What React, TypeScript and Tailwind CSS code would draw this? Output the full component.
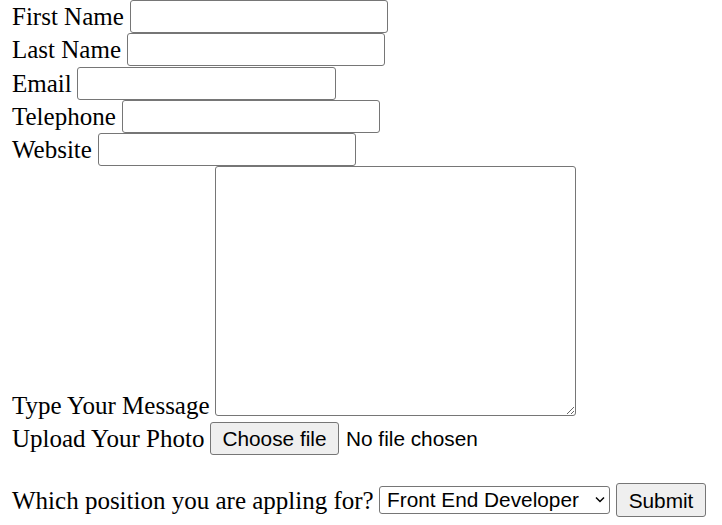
const fields = [
  { label: "First Name", w: "w-[118px]", input: "w-[258px]" },
  { label: "Last Name", w: "w-[115px]", input: "w-[258px]" },
  { label: "Email", w: "w-[65px]", input: "w-[259px]" },
  { label: "Telephone", w: "w-[110px]", input: "w-[258px]" },
  { label: "Website", w: "w-[86px]", input: "w-[258px]" },
];

export default function App() {
  return (
    <div className="min-h-[525px] bg-white text-black font-['Liberation_Serif','Times_New_Roman',serif] text-[25px]">
      <form className="flex flex-col pl-[12px]">
        {fields.map((f) => (
          <div key={f.label} className="flex h-[33.3px] items-center">
            <label className={`${f.w} shrink-0 whitespace-nowrap`}>{f.label}</label>
            <input
              type="text"
              className={`${f.input} h-[33px] rounded-[3px] border border-[#767676] bg-white px-[3px] text-[20px] outline-none`}
            />
          </div>
        ))}

        <div className="flex items-end">
          <label className="mb-[-8px] w-[203px] shrink-0 whitespace-nowrap">
            Type Your Message
          </label>
          <textarea className="block h-[250px] w-[361px] rounded-[3px] border border-[#767676] bg-white outline-none" />
        </div>

        <div className="mt-[6px] flex h-[33px] items-center">
          <label className="w-[198px] shrink-0 whitespace-nowrap">Upload Your Photo</label>
          <button
            type="button"
            className="flex h-[33px] w-[129px] items-center justify-center rounded-[3px] border border-[#767676] bg-[#efefef] font-['Liberation_Sans',Arial,sans-serif] text-[20.8px]"
          >
            Choose file
          </button>
          <span className="ml-[7px] font-['Liberation_Sans',Arial,sans-serif] text-[20.8px]">
            No file chosen
          </span>
        </div>

        <div className="mt-[28px] flex h-[34px] items-center">
          <label className="w-[367px] shrink-0 whitespace-nowrap">
            Which position you are appling for?
          </label>
          <div className="relative">
            <select className="block h-[28px] w-[231px] appearance-none rounded-[3px] border border-[#767676] bg-white pl-[7px] font-['Liberation_Sans',Arial,sans-serif] text-[20.8px] leading-none outline-none">
              <option>Front End Developer</option>
              <option>Back End Developer</option>
              <option>Full Stack Developer</option>
            </select>
            <svg
              className="pointer-events-none absolute right-[5px] top-[10px]"
              width="10"
              height="7"
              viewBox="0 0 10 7"
              fill="none"
              stroke="black"
              strokeWidth="1.5"
            >
              <path d="M1 1.5 L5 5.5 L9 1.5" />
            </svg>
          </div>
          <button
            type="submit"
            className="ml-[6px] flex h-[34px] w-[90px] items-center justify-center rounded-[3px] border border-[#767676] bg-[#efefef] font-['Liberation_Sans',Arial,sans-serif] text-[20.8px]"
          >
            Submit
          </button>
        </div>
      </form>
    </div>
  );
}
